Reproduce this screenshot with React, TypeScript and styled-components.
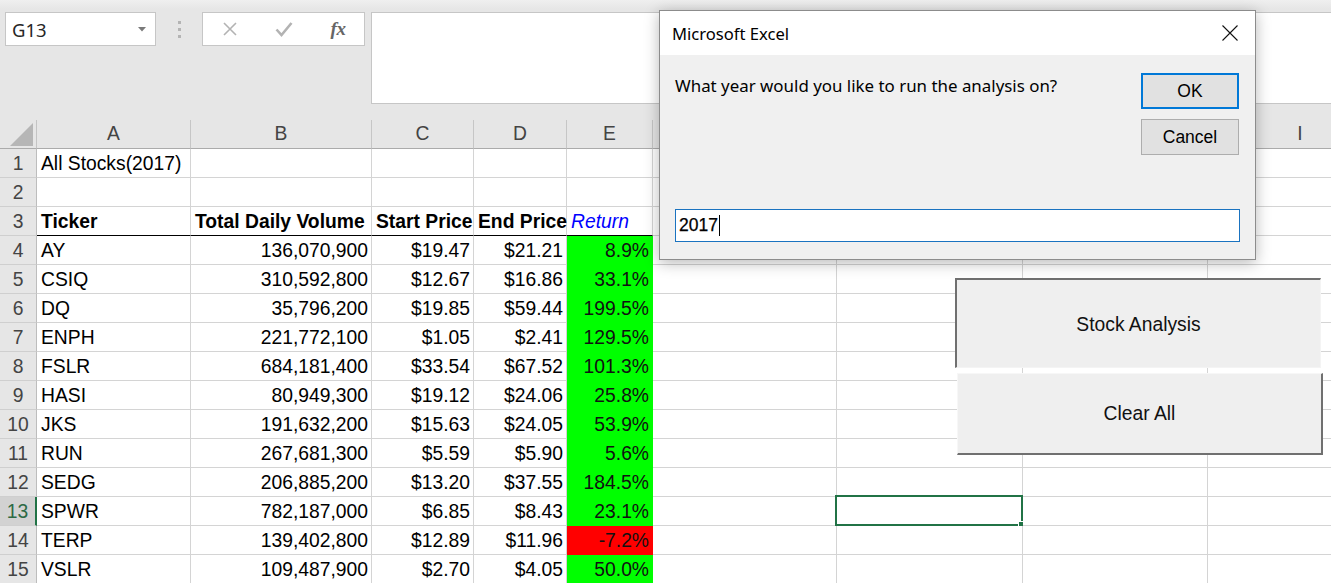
import React from 'react';
import styled, { createGlobalStyle } from 'styled-components';

const GlobalStyle = createGlobalStyle`
  html, body { margin: 0; padding: 0; background: #fff; overflow: hidden; }
  #root { width: 1331px; height: 583px; }
`;

const SHEET_FONT = `"Liberation Sans", Arial, sans-serif`;
const UI_FONT = `"Noto Sans", "Open Sans", sans-serif`;

const Window = styled.div`
  position: relative;
  width: 1331px;
  height: 583px;
  overflow: hidden;
  background: #fff;
  font-family: ${SHEET_FONT};
`;

/* ---------- formula bar ---------- */
const FormulaArea = styled.div`
  height: 120px;
  box-sizing: border-box;
  padding-top: 12px;
  display: flex;
  align-items: flex-start;
  background: linear-gradient(#efefef 0, #e6e6e6 9px);
`;

const NameBox = styled.div`
  margin-left: 5px;
  width: 151px;
  height: 34px;
  box-sizing: border-box;
  border: 1px solid #c6c6c6;
  background: #fff;
  display: flex;
  align-items: center;
  justify-content: space-between;
  padding: 0 9px 0 6px;
  font-family: ${UI_FONT};
  font-size: 18.5px;
  color: #262626;
`;

const Grip = styled.div`
  width: 46px;
  height: 34px;
  display: flex;
  flex-direction: column;
  align-items: center;
  justify-content: center;
  gap: 4px;
`;

const GripDot = styled.span`
  width: 3px;
  height: 3px;
  background: #b4b4b4;
`;

const FxBox = styled.div`
  width: 163px;
  height: 34px;
  box-sizing: border-box;
  border: 1px solid #c6c6c6;
  background: #fff;
  display: grid;
  grid-template-columns: repeat(3, 54px);
  align-items: center;
  justify-items: center;
`;

const FxLabel = styled.span`
  font-family: "Liberation Serif", "DejaVu Serif", serif;
  font-style: italic;
  font-weight: bold;
  font-size: 19px;
  color: #666;
  letter-spacing: -0.5px;
`;

const FormulaInput = styled.div`
  margin-left: 6px;
  flex: 1;
  height: 92px;
  box-sizing: border-box;
  border: 1px solid #c6c6c6;
  border-right: none;
  background: #fff;
`;

/* ---------- grid ---------- */
const Sheet = styled.div`
  display: grid;
  grid-template-columns: 37px 154px 181px 102px 93px 86px 184px 186px 185px 185px;
  grid-auto-rows: 29px;
  width: max-content;
  font-size: 19.3px;
`;

const Corner = styled.div`
  position: relative;
  background: #e6e6e6;
  border-right: 1px solid #c4c4c4;
  border-bottom: 1px solid #ababab;
`;

const CornerMark = styled.svg`
  position: absolute;
  left: 0;
  top: 0;
`;

const ColHeader = styled.div`
  background: #e6e6e6;
  border-right: 1px solid #c6c6c6;
  border-bottom: 1px solid #ababab;
  display: flex;
  align-items: center;
  justify-content: center;
  color: #444;
`;

const RowHeader = styled.div<{ $active?: boolean }>`
  background: ${(p) => (p.$active ? '#d2d2d2' : '#e6e6e6')};
  color: ${(p) => (p.$active ? '#2d6a45' : '#444')};
  border-bottom: 1px solid #cfcfcf;
  border-right: ${(p) => (p.$active ? '2px solid #217346' : '1px solid #bdbdbd')};
  display: flex;
  align-items: center;
  justify-content: center;
  padding-top: 1px;
  box-sizing: border-box;
`;

type Align = 'left' | 'right';

const Cell = styled.div<{
  $align?: Align;
  $bold?: boolean;
  $italic?: boolean;
  $tone?: string;
  $fill?: string;
  $rule?: boolean;
}>`
  position: relative;
  box-sizing: border-box;
  display: flex;
  align-items: center;
  padding: 1px 3px 0 4px;
  white-space: nowrap;
  justify-content: ${(p) => (p.$align === 'right' ? 'flex-end' : 'flex-start')};
  font-weight: ${(p) => (p.$bold ? 'bold' : 'normal')};
  font-style: ${(p) => (p.$italic ? 'italic' : 'normal')};
  color: ${(p) => p.$tone || '#000'};
  background: ${(p) => p.$fill || '#fff'};
  border-right: 1px solid ${(p) => p.$fill || '#d4d4d4'};
  border-bottom: 1px solid ${(p) => (p.$rule ? '#000' : p.$fill || '#d4d4d4')};
`;

const SelectionFrame = styled.div`
  position: absolute;
  left: -2px;
  top: -2px;
  right: -1px;
  bottom: -1px;
  border: 2px solid #217346;
  pointer-events: none;
`;

const FillHandle = styled.span`
  position: absolute;
  right: -5px;
  bottom: -5px;
  width: 7px;
  height: 7px;
  background: #217346;
  box-shadow: -1px -1px 0 #fff;
`;

/* ---------- sheet buttons (floating shapes) ---------- */
const ShapeButton = styled.div`
  position: absolute;
  box-sizing: border-box;
  background: #efefef;
  display: flex;
  align-items: center;
  justify-content: center;
  font-family: ${SHEET_FONT};
  font-size: 19.3px;
  color: #111;
`;

const StockButton = styled(ShapeButton)`
  left: 955px;
  top: 278px;
  width: 366px;
  height: 90px;
  border-top: 2px solid #707070;
  border-left: 2px solid #707070;
  border-right: 1px solid #f4f4f4;
  border-bottom: 1px solid #f4f4f4;
  padding-top: 2px;
`;

const ClearButton = styled(ShapeButton)`
  left: 957px;
  top: 373px;
  width: 366px;
  height: 82px;
  border-top: 1px solid #f7f7f7;
  border-left: 1px solid #f7f7f7;
  border-right: 2px solid #707070;
  border-bottom: 2px solid #707070;
`;

/* ---------- dialog ---------- */
const Dialog = styled.div`
  position: absolute;
  left: 659px;
  top: 10px;
  width: 597px;
  height: 250px;
  box-sizing: border-box;
  border: 1px solid #8c8c8c;
  background: #f0f0f0;
  box-shadow: 0 3px 14px rgba(0, 0, 0, 0.28);
  display: flex;
  flex-direction: column;
`;

const TitleBar = styled.div`
  height: 44px;
  background: #fff;
  display: flex;
  align-items: center;
  justify-content: space-between;
  padding: 0 17px 0 12px;
  font-family: ${UI_FONT};
  font-size: 16.6px;
  color: #000;
`;

const DialogBody = styled.div`
  flex: 1;
  display: flex;
  flex-direction: column;
  padding: 18px 16px 17px 15px;
`;

const DialogTop = styled.div`
  display: flex;
  justify-content: space-between;
  align-items: flex-start;
`;

const Prompt = styled.div`
  font-family: ${UI_FONT};
  font-size: 16.9px;
  color: #000;
  margin-top: 1px;
`;

const ButtonColumn = styled.div`
  display: flex;
  flex-direction: column;
  gap: 10px;
`;

const DialogButton = styled.div<{ $primary?: boolean }>`
  width: 98px;
  height: 36px;
  box-sizing: border-box;
  background: #e1e1e1;
  border: ${(p) => (p.$primary ? '2px solid #0078d7' : '1px solid #adadad')};
  display: flex;
  align-items: center;
  justify-content: center;
  font-family: ${SHEET_FONT};
  font-size: 17.5px;
  color: #000;
`;

const Spacer = styled.div`
  flex: 1;
`;

const TextBox = styled.div`
  height: 33px;
  margin-right: -1px;
  box-sizing: border-box;
  border: 1px solid #1a73c0;
  background: #fff;
  display: flex;
  align-items: center;
  padding-left: 3px;
  font-family: ${SHEET_FONT};
  font-size: 17.5px;
  color: #000;
  -webkit-text-stroke: 0.25px #000;
`;

const Caret = styled.span`
  display: inline-block;
  width: 1px;
  height: 21px;
  background: #000;
  margin-left: 1px;
`;

/* ---------- data ---------- */
type Row = [string, string, string, string, string, boolean];

const rows: Row[] = [
  ['AY', '136,070,900', '$19.47', '$21.21', '8.9%', true],
  ['CSIQ', '310,592,800', '$12.67', '$16.86', '33.1%', true],
  ['DQ', '35,796,200', '$19.85', '$59.44', '199.5%', true],
  ['ENPH', '221,772,100', '$1.05', '$2.41', '129.5%', true],
  ['FSLR', '684,181,400', '$33.54', '$67.52', '101.3%', true],
  ['HASI', '80,949,300', '$19.12', '$24.06', '25.8%', true],
  ['JKS', '191,632,200', '$15.63', '$24.05', '53.9%', true],
  ['RUN', '267,681,300', '$5.59', '$5.90', '5.6%', true],
  ['SEDG', '206,885,200', '$13.20', '$37.55', '184.5%', true],
  ['SPWR', '782,187,000', '$6.85', '$8.43', '23.1%', true],
  ['TERP', '139,402,800', '$12.89', '$11.96', '-7.2%', false],
  ['VSLR', '109,487,900', '$2.70', '$4.05', '50.0%', true],
];

const COLS = ['A', 'B', 'C', 'D', 'E', 'F', 'G', 'H', 'I'];
const EXTRA = 4; // F..I

function EmptyTail({ row }: { row: number }) {
  return (
    <>
      {Array.from({ length: EXTRA }).map((_, i) => (
        <Cell key={i}>
          {row === 13 && i === 1 ? (
            <SelectionFrame>
              <FillHandle />
            </SelectionFrame>
          ) : null}
        </Cell>
      ))}
    </>
  );
}

export default function App() {
  return (
    <Window>
      <GlobalStyle />
      <FormulaArea>
        <NameBox>
          <span>G13</span>
          <svg width="8" height="5" viewBox="0 0 8 5">
            <polygon points="0,0 8,0 4,4.5" fill="#7a7a7a" />
          </svg>
        </NameBox>
        <Grip>
          <GripDot />
          <GripDot />
          <GripDot />
        </Grip>
        <FxBox>
          <svg width="16" height="16" viewBox="0 0 16 16">
            <path d="M2 2 L14 14 M14 2 L2 14" stroke="#b3b3b3" strokeWidth="1.6" fill="none" />
          </svg>
          <svg width="18" height="16" viewBox="0 0 18 16">
            <path d="M1.5 8.5 L6.5 14 L16.5 2" stroke="#b3b3b3" strokeWidth="2.6" fill="none" />
          </svg>
          <FxLabel>fx</FxLabel>
        </FxBox>
        <FormulaInput />
      </FormulaArea>

      <Sheet>
        <Corner>
          <CornerMark width="37" height="29" viewBox="0 0 37 29">
            <polygon points="33,3 33,26 10,26" fill="#b6b6b6" />
          </CornerMark>
        </Corner>
        {COLS.map((c) => (
          <ColHeader key={c}>{c}</ColHeader>
        ))}

        <RowHeader>1</RowHeader>
        <Cell>All Stocks(2017)</Cell>
        <Cell />
        <Cell />
        <Cell />
        <Cell />
        <EmptyTail row={1} />

        <RowHeader>2</RowHeader>
        <Cell />
        <Cell />
        <Cell />
        <Cell />
        <Cell />
        <EmptyTail row={2} />

        <RowHeader>3</RowHeader>
        <Cell $bold $rule>Ticker</Cell>
        <Cell $bold $rule>Total Daily Volume</Cell>
        <Cell $bold $rule>Start Price</Cell>
        <Cell $bold $rule>End Price</Cell>
        <Cell $italic $rule $tone="#0000ff">Return</Cell>
        <EmptyTail row={3} />

        {rows.map(([t, v, s, e, r, up], i) => {
          const n = i + 4;
          return (
            <React.Fragment key={t}>
              <RowHeader $active={n === 13}>{n}</RowHeader>
              <Cell>{t}</Cell>
              <Cell $align="right">{v}</Cell>
              <Cell $align="right">{s}</Cell>
              <Cell $align="right">{e}</Cell>
              <Cell $align="right" $fill={up ? '#00ff00' : '#ff0000'} $tone="#111">
                {r}
              </Cell>
              <EmptyTail row={n} />
            </React.Fragment>
          );
        })}
      </Sheet>

      <StockButton>Stock Analysis</StockButton>
      <ClearButton>Clear All</ClearButton>

      <Dialog>
        <TitleBar>
          <span>Microsoft Excel</span>
          <svg width="16" height="16" viewBox="0 0 16 16">
            <path d="M0.5 0.5 L15.5 15.5 M15.5 0.5 L0.5 15.5" stroke="#111" strokeWidth="1.1" fill="none" />
          </svg>
        </TitleBar>
        <DialogBody>
          <DialogTop>
            <Prompt>What year would you like to run the analysis on?</Prompt>
            <ButtonColumn>
              <DialogButton $primary>OK</DialogButton>
              <DialogButton>Cancel</DialogButton>
            </ButtonColumn>
          </DialogTop>
          <Spacer />
          <TextBox>
            2017
            <Caret />
          </TextBox>
        </DialogBody>
      </Dialog>
    </Window>
  );
}
